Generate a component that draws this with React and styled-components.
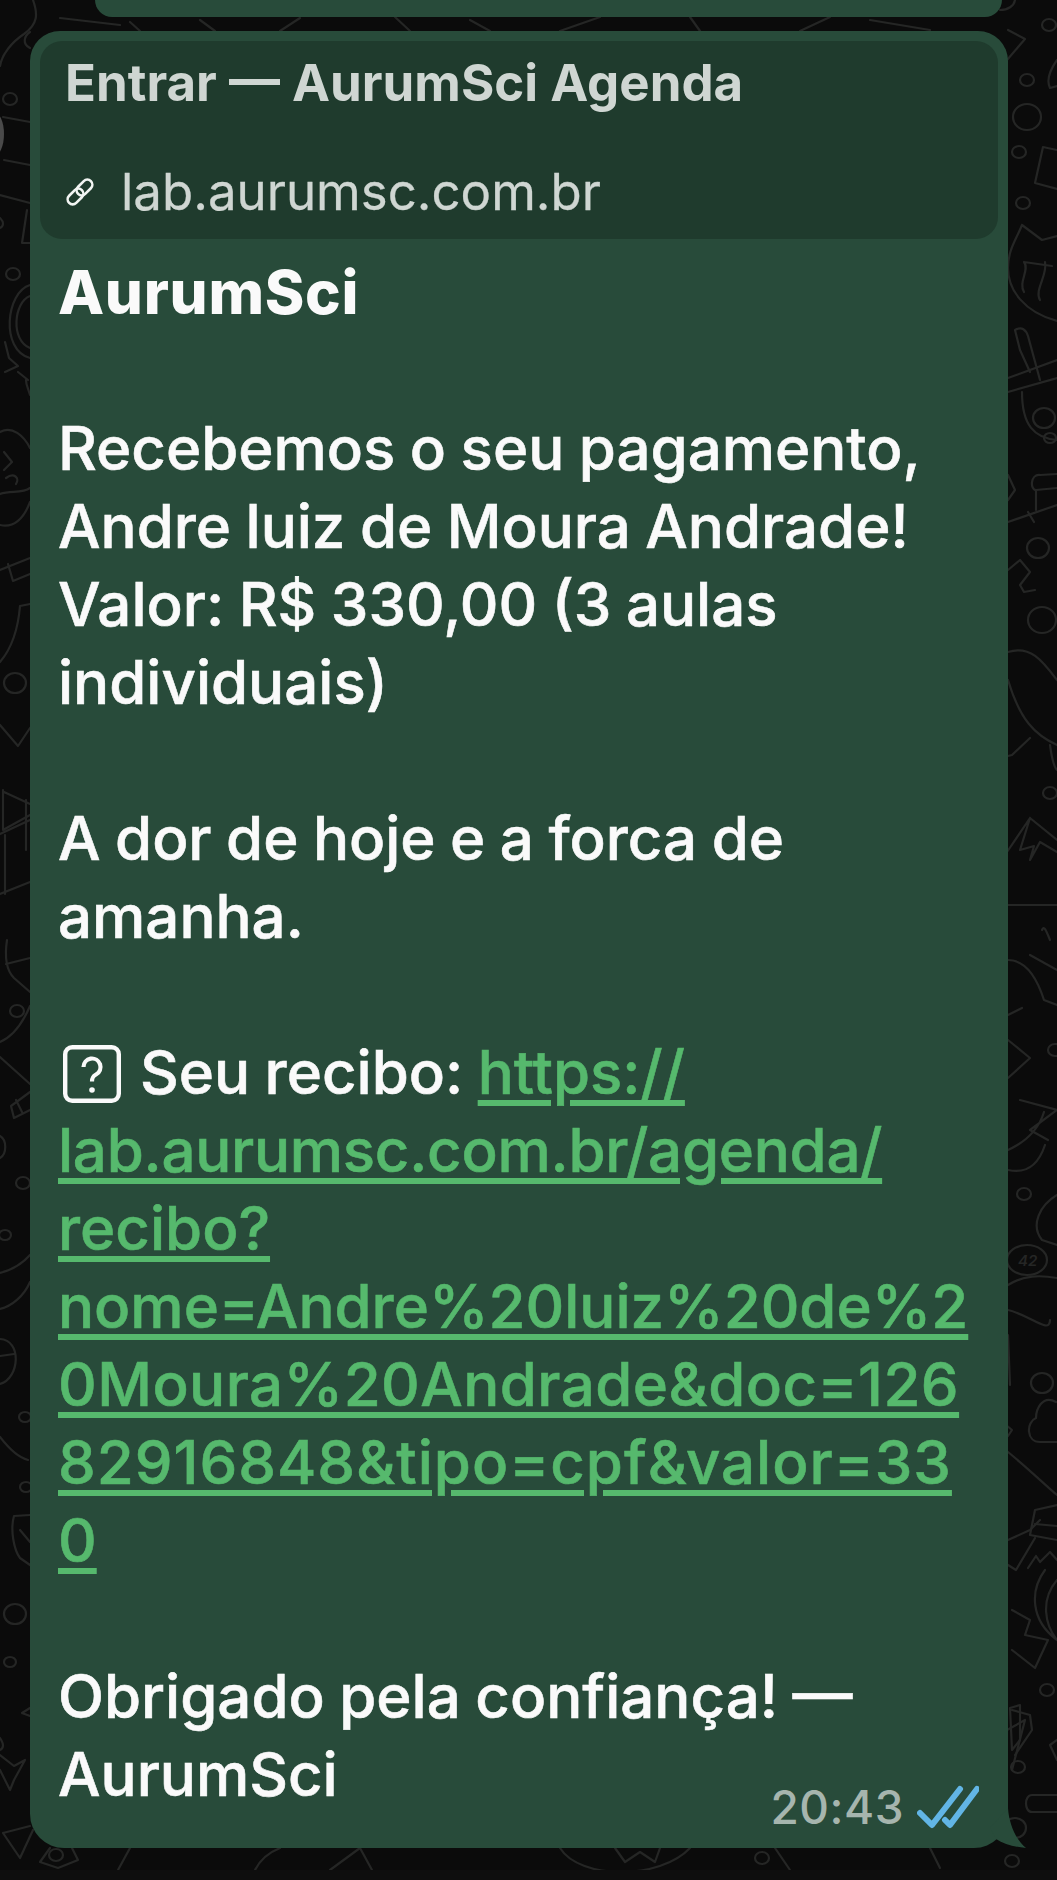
import React from "react";
import styled, { createGlobalStyle } from "styled-components";

const GlobalStyle = createGlobalStyle`
  html, body { margin: 0; padding: 0; background: #0b0b0b; }
  body { width: 1057px; height: 1880px; overflow: hidden; font-family: "Inter", "Liberation Sans", sans-serif; }
`;

const Screen = styled.div`
  position: relative;
  width: 1057px;
  height: 1880px;
  overflow: hidden;
  background: #0b0b0b;
`;

const Doodles = styled.svg`
  position: absolute;
  inset: 0;
  fill: none;
  stroke: #252625;
  stroke-width: 2.2;
  stroke-linejoin: round;
  stroke-linecap: round;
`;

const DoodleLabel = styled.text`
  font-family: "Inter", sans-serif;
  font-size: 15px;
  font-style: italic;
  font-weight: 600;
  fill: #252625;
  stroke: none;
`;

const Footer = styled.div`
  position: absolute;
  left: 0;
  right: 0;
  bottom: 0;
  height: 10px;
  background: #0e0e0e;
`;

const AvatarEdge = styled.div`
  position: absolute;
  left: -16px;
  top: 112px;
  width: 20px;
  height: 44px;
  border-radius: 50%;
  background: #4a4a4a;
`;

const Thread = styled.div`
  position: relative;
  display: flex;
  flex-direction: column;
  gap: 14px;
`;

const PrevBubble = styled.div`
  height: 17px;
  margin: 0 55px 0 95px;
  background: #284b3a;
  border-radius: 0 0 26px 26px;
`;

const Bubble = styled.div`
  position: relative;
  width: 978px;
  height: 1817px;
  margin-left: 30px;
  box-sizing: border-box;
  padding: 10px 10px 0;
  background: #284b3a;
  border-radius: 30px 30px 34px 34px;
`;

const Tail = styled.svg`
  position: absolute;
  right: -18px;
  bottom: 0;
  fill: #284b3a;
`;

const LinkPreview = styled.div`
  height: 198px;
  box-sizing: border-box;
  padding: 15px 25px 0;
  background: #1f3b2d;
  border-radius: 22px;
  color: #cfd6d2;
`;

const PreviewTitle = styled.div`
  font-size: 51px;
  line-height: 54px;
  font-weight: 700;
`;

const PreviewUrl = styled.div`
  display: flex;
  align-items: center;
  gap: 26px;
  margin-top: 55px;
  font-size: 51px;
  line-height: 54px;
  font-weight: 400;
  -webkit-text-stroke: 0.3px #cfd6d2;
`;

const LinkIcon = styled.svg`
  flex: none;
  fill: none;
  stroke: #f2f5f3;
  stroke-width: 2.6;
`;

const Body = styled.div`
  padding: 14px 0 0 18px;
  color: #fafafa;
  font-size: 60px;
  line-height: 78px;
  white-space: pre;
  word-spacing: -1.5px;
`;

const Line = styled.div`
  height: 78px;
  font-weight: ${(p) => (p.$bold ? 800 : 500)};
  letter-spacing: ${(p) => (p.$bold ? "0.7px" : "0")};
  margin-top: ${(p) => (p.$gap ? "78px" : "0")};
  -webkit-text-stroke: ${(p) => (p.$bold ? "0" : "0.6px")};
`;

const Url = styled.span`
  color: #56b96d;
  letter-spacing: ${(p) => p.$track || "0"};
  text-decoration: underline;
  text-decoration-thickness: 6px;
  text-underline-offset: 6px;
  text-decoration-skip-ink: auto;
`;

const Unknown = styled.svg`
  display: inline-block;
  width: 58px;
  height: 58px;
  margin: 0 19px 0 5px;
  vertical-align: -9px;
  fill: none;
  stroke: #fafafa;
`;

const Meta = styled.div`
  position: absolute;
  right: 29px;
  bottom: 19px;
  display: flex;
  align-items: center;
  gap: 13px;
  color: #a6b5ae;
  font-size: 46px;
  font-weight: 500;
  line-height: 44px;
  letter-spacing: 0.5px;
`;

const doodles = [
  // left margin
  "M33 0 C38 14 38 24 24 34 C12 42 2 54 0 66",
  "M30 32 C24 36 22 44 30 48",
  "M3 117 L30 122", "M4 160 L30 165", "M0 195 L30 203",
  "M27 210 L22 243 L30 243", "M0 218 C4 222 4 226 0 228",
  "M30 285 C6 292 0 350 30 358", "M30 296 C14 302 10 340 30 348",
  "M5 342 L9 358 L18 366 L5 372 M18 372 L28 380 M30 395 C28 388 26 385 26 380",
  "M0 432 C12 425 24 436 30 448 M4 452 L12 462 L4 470 M6 478 C14 472 20 478 16 484 M0 494 C10 490 22 494 30 488 M0 525 C14 528 24 518 30 502",
  "M0 570 L30 558", "M8 564 L13 581 L30 574",
  "M20 606 L30 604 M20 606 C18 630 12 648 0 662",
  "M0 725 L18 746 L30 728",
  "M4 792 L30 804 M3 790 L3 830 L30 815 M0 834 L30 820 M5 894 L5 835 M0 894 L30 882 M26 800 L26 850",
  "M7 940 C4 960 8 972 14 978 L30 992 M6 964 L30 958",
  "M0 1042 C14 1036 24 1020 30 1006", "M0 1057 L30 1084",
  "M11 1106 L30 1092 M14 1118 L30 1110 M11 1106 L14 1118 M16 1100 L22 1112",
  "M0 1136 C7 1140 7 1154 0 1158",
  "M0 1273 C12 1270 22 1264 30 1255", "M0 1309 C12 1306 24 1296 30 1282",
  "M0 1339 C22 1340 20 1378 0 1384 M0 1356 L14 1354",
  "M0 1437 C10 1450 20 1458 28 1460",
  "M30 1515 L14 1516 C10 1530 14 1550 20 1558 L30 1565 M20 1530 L30 1542",
  "M22 1713 L30 1708 M22 1713 L30 1716", "M0 1738 C4 1744 4 1748 0 1750",
  "M0 1755 L14 1766 L25 1760 L14 1780 L10 1790 L0 1770",
  "M3 1833 L20 1858 L33 1830 M3 1833 L30 1826",
  // top gap
  "M60 18 L120 25 M130 22 L140 31 M200 20 L215 31 M300 18 L280 31 M395 17 L410 31 M470 20 L490 31 M560 31 L600 17 M690 17 L700 31 M800 31 L830 17 M870 20 L930 30",
  // right margin
  "M1007 60 L1025 39 L1008 30", "M1000 10 C1008 10 1014 6 1015 0",
  "M1057 60 C1050 70 1046 80 1050 88 L1057 86",
  "M1043 147 L1035 183 L1057 189 M1043 147 L1057 150",
  "M1022 225 C1016 240 1008 250 1008 268 C1008 290 1024 312 1057 321 M1022 225 L1042 240 L1057 236",
  "M1024 262 C1030 270 1018 282 1024 292 M1045 262 C1048 275 1034 290 1040 300 M1024 262 L1052 266",
  "M1015 330 L1020 350 L1030 372 M1015 330 C1022 326 1026 330 1028 336 L1040 380 M1008 378 L1057 360 M1008 392 L1057 378",
  "M1022 392 C1022 425 1034 438 1057 440",
  "M1008 475 L1015 490 L1008 500", "M1040 475 C1030 474 1030 490 1036 490 L1036 510 M1040 475 L1057 474 M1036 490 L1057 488",
  "M1008 522 L1057 505 M1028 512 L1034 522",
  "M1008 570 L1020 560 L1030 572 L1020 585 L1024 592 L1035 590",
  "M1008 652 C1030 645 1042 660 1057 680", "M1008 680 C1020 720 1035 735 1057 745",
  "M1030 738 L1012 755 L1008 756 M1050 745 C1052 760 1055 768 1057 770",
  "M1007 852 L1030 818 L1057 840 M1030 818 L1020 850 L1034 846 L1030 860 L1040 842 L1057 852",
  "M1000 905 L1057 905",
  "M1050 940 C1046 930 1044 925 1042 930",
  "M1008 960 C1024 960 1036 975 1044 1000 L1057 1005 M1030 955 L1057 970",
  "M1008 1040 L1030 1058 L1008 1078 M1008 1015 L1022 1008",
  "M1020 1100 L1057 1110 L1030 1130 L1048 1140 M1008 1150 C1030 1140 1040 1125 1044 1112 M1008 1170 C1030 1175 1040 1160 1045 1145",
  "M1057 1195 C1040 1205 1030 1225 1042 1240 L1057 1245",
  "M1008 1285 C1024 1275 1040 1275 1057 1278 M1008 1310 C1030 1315 1050 1335 1050 1320",
  "M1008 1335 L1010 1385", "M1006 1425 L1012 1430 L1008 1436",
  "M1056 1402 C1042 1394 1036 1410 1036 1418 C1026 1422 1026 1442 1040 1442 L1057 1442",
  "M1008 1452 C1030 1470 1045 1485 1057 1495", "M1008 1540 L1030 1530 L1040 1520 M1008 1565 L1016 1570 L1035 1538",
  "M1057 1505 L1035 1510 L1030 1535 L1057 1540 M1035 1524 L1057 1526",
  "M1028 1568 L1036 1556 L1040 1562 L1050 1552 L1057 1560 M1045 1570 C1030 1590 1030 1620 1057 1640 M1057 1580 C1040 1600 1045 1625 1057 1640",
  "M1012 1610 L1030 1620 L1025 1635 L1048 1640 L1035 1668 L1012 1650",
  "M1020 1705 L1010 1708 L1012 1750 L1020 1740 Z",
  "M1007 1730 L1025 1720 L1012 1770", "M1012 1710 L1030 1715 L1032 1730 L1015 1755",
  "M1057 1740 L1050 1745 L1057 1760", "M1057 1795 L1032 1795 C1024 1795 1024 1812 1032 1812 L1057 1812",
  // bottom gap
  "M50 1848 L40 1862 L58 1868 L78 1860 L72 1848",
  "M130 1848 L118 1870 M330 1870 L360 1848 L372 1870 M255 1870 C260 1860 270 1852 280 1848",
  "M560 1848 C580 1880 660 1880 690 1848", "M615 1848 L625 1862 L640 1852 L655 1862 L660 1848",
  "M775 1848 L790 1870 M930 1848 L940 1868",
];

const rings = [
  [10, 99, 6], [13, 274, 6], [15, 683, 10], [17, 1011, 6], [23, 1183, 6], [5, 1235, 5],
  [25, 1417, 5], [26, 1487, 5], [15, 1614, 10], [10, 1662, 5],
  [1049, 25, 6], [1027, 80, 6], [1027, 117, 13], [1019, 152, 6], [1023, 203, 6],
  [1044, 418, 10], [1050, 438, 5], [1038, 548, 10], [1042, 620, 13], [1050, 793, 6],
  [1055, 1050, 6], [1024, 1194, 6], [1042, 1383, 10], [1047, 1690, 6], [1018, 1767, 6],
  [1015, 1828, 10], [1012, 1861, 6], [56, 1855, 6], [762, 1858, 6],
];

const LinkGlyph = () => (
  <LinkIcon width="30" height="30" viewBox="0 0 30 30">
    <rect x="1.5" y="14.5" width="18" height="10" rx="5" transform="rotate(-45 10.5 19.5)" />
    <rect x="10.5" y="5.5" width="18" height="10" rx="5" transform="rotate(-45 19.5 10.5)" />
  </LinkIcon>
);

const App = () => (
  <Screen>
    <GlobalStyle />
    <Doodles width="1057" height="1880" viewBox="0 0 1057 1880">
      {doodles.map((d, i) => <path key={i} d={d} />)}
      {rings.map(([cx, cy, r], i) => <ellipse key={i} cx={cx} cy={cy} rx={r + 1} ry={r} />)}
      <ellipse cx="1027" cy="1260" rx="20" ry="15" />
      <DoodleLabel x="1018" y="1266">42</DoodleLabel>
    </Doodles>
    <AvatarEdge />
    <Footer />
    <Thread>
      <PrevBubble />
      <Bubble>
        <LinkPreview>
          <PreviewTitle>Entrar — AurumSci Agenda</PreviewTitle>
          <PreviewUrl>
            <LinkGlyph />
            lab.aurumsc.com.br
          </PreviewUrl>
        </LinkPreview>
        <Body>
          <Line $bold>AurumSci</Line>
          <Line $gap>Recebemos o seu pagamento,</Line>
          <Line>Andre luiz de Moura Andrade!</Line>
          <Line>Valor: R$ 330,00 (3 aulas</Line>
          <Line>individuais)</Line>
          <Line $gap>A dor de hoje e a forca de</Line>
          <Line>amanha.</Line>
          <Line $gap>
            <Unknown viewBox="0 0 58 58">
              <rect x="2.2" y="2.2" width="53.6" height="53.6" rx="7" strokeWidth="4.4" />
              <path d="M20.5 22 a8.5 8.5 0 1 1 12.5 7.5 c-3 1.6 -4 3 -4 7" strokeWidth="4.2" />
              <circle cx="29" cy="45" r="2.8" fill="#fafafa" stroke="none" />
            </Unknown>
            Seu recibo: <Url>https://</Url>
          </Line>
          <Line><Url $track="-0.27px">lab.aurumsc.com.br/agenda/</Url></Line>
          <Line><Url>recibo?</Url></Line>
          <Line><Url>nome=Andre%20luiz%20de%2</Url></Line>
          <Line><Url $track="0.46px">0Moura%20Andrade&amp;doc=126</Url></Line>
          <Line><Url $track="1px">82916848&amp;tipo=cpf&amp;valor=33</Url></Line>
          <Line><Url>0</Url></Line>
          <Line $gap>Obrigado pela confiança! —</Line>
          <Line>AurumSci</Line>
        </Body>
        <Meta>
          20:43
          <svg width="62" height="44" viewBox="0 0 62 44" fill="none" stroke="#62b5e5" strokeWidth="6" strokeLinecap="round" strokeLinejoin="round">
            <path d="M3 28 L15 40 L43 4" />
            <path d="M28 35 L33 40 L60 4" />
          </svg>
        </Meta>
        <Tail width="36" height="40" viewBox="0 0 36 40">
          <path d="M18 0 C19 16 26 32 36 40 C24 39 14 36 6 31 L0 20 Z" />
        </Tail>
      </Bubble>
    </Thread>
  </Screen>
);

export default App;
